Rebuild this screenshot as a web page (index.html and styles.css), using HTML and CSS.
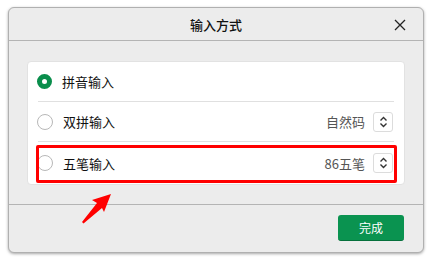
FILE: index.html
```html
<!DOCTYPE html>
<html lang="zh">
<head>
<meta charset="utf-8">
<link rel="stylesheet" href="styles.css">
</head>
<body>
<div class="dialog">
  <div class="header">
    <span class="title">输入方式</span>
    <svg class="close" width="12" height="12" viewBox="0 0 12 12"><path d="M1 1L11 11M11 1L1 11" stroke="#222" stroke-width="1.3" fill="none"/></svg>
  </div>
  <div class="content">
    <div class="card">
      <div class="row">
        <span class="radio on"></span>
        <span class="label">拼音输入</span>
      </div>
      <div class="sep"></div>
      <div class="row">
        <span class="radio"></span>
        <span class="label">双拼输入</span>
        <span class="value">自然码</span>
        <span class="stepper"><svg width="9" height="12" viewBox="0 0 9 12"><path d="M1.5 4.5L4.5 1.5L7.5 4.5M1.5 7.5L4.5 10.5L7.5 7.5" stroke="#333" stroke-width="1.4" fill="none"/></svg></span>
      </div>
      <div class="sep"></div>
      <div class="row last">
        <span class="radio"></span>
        <span class="label">五笔输入</span>
        <span class="value">86五笔</span>
        <span class="stepper"><svg width="9" height="12" viewBox="0 0 9 12"><path d="M1.5 4.5L4.5 1.5L7.5 4.5M1.5 7.5L4.5 10.5L7.5 7.5" stroke="#333" stroke-width="1.4" fill="none"/></svg></span>
        <span class="highlight"></span>
      </div>
    </div>
    <svg class="arrow" width="40" height="36" viewBox="0 0 40 36"><polygon points="1,29 2.5,30.5 21,15 23,19 30,1 11,7 16,10" fill="#ff0000"/></svg>
  </div>
  <div class="footer">
    <button class="done">完成</button>
  </div>
</div>
</body>
</html>
```
FILE: styles.css
```css
html, body {
  margin: 0;
  padding: 0;
  background: #ffffff;
}
body {
  padding: 7px 8px;
  font-family: "Noto Sans CJK SC", "Noto Sans", sans-serif;
}
.dialog {
  width: 414px;
  height: 244px;
  background: #ececec;
  border: 1px solid #b0b0b0;
  border-radius: 6px;
  box-shadow: 0 1px 3px rgba(0,0,0,0.35);
  display: flex;
  flex-direction: column;
  overflow: hidden;
}
.header {
  height: 32px;
  border-bottom: 1px solid #b4b4b4;
  display: flex;
  align-items: center;
  justify-content: center;
  position: relative;
}
.title {
  font-size: 13px;
  font-weight: 500;
  color: #111;
}
.close {
  position: absolute;
  right: 17px;
  top: 11px;
}
.content {
  height: 164px;
  border-bottom: 1px solid #b4b4b4;
  padding: 20px 18px 0 18px;
  box-sizing: border-box;
  position: relative;
}
.card {
  background: #fff;
  border: 1px solid #e2e2e2;
  border-radius: 4px;
  height: 124px;
  box-sizing: border-box;
  display: flex;
  flex-direction: column;
}
.row {
  height: 39px;
  display: flex;
  align-items: center;
  padding: 0 11px 0 9px;
  position: relative;
}
.row.last {
  height: 42px;
}
.sep {
  height: 1px;
  background: #e0e0e0;
  margin: 0 10px;
}
.radio {
  width: 14px;
  height: 14px;
  border: 1px solid #b8b8b8;
  border-radius: 50%;
  box-sizing: content-box;
  background: #fff;
}
.radio.on {
  width: 5px;
  height: 5px;
  border: 5.5px solid #0a8e4c;
}
.label {
  font-size: 13px;
  color: #111;
  margin-left: 10px;
  flex: 1;
}
.value {
  font-size: 13px;
  color: #555;
  margin-right: 8px;
}
.stepper {
  width: 18px;
  height: 18px;
  border: 1px solid #dcdcdc;
  border-radius: 3px;
  display: flex;
  align-items: center;
  justify-content: center;
  background: #fff;
}
.highlight {
  position: absolute;
  left: 8px;
  right: 7px;
  top: 3px;
  bottom: 1px;
  border: 3px solid #ff0000;
  border-radius: 2px;
  pointer-events: none;
}
.arrow {
  position: absolute;
  left: 72px;
  top: 152px;
}
.footer {
  flex: 1;
  display: flex;
  justify-content: flex-end;
  align-items: flex-start;
  padding: 10px 19px 0 0;
}
.done {
  width: 66px;
  height: 26px;
  background: #0a9350;
  border: none;
  border-bottom: 1px solid #06703c;
  border-radius: 3px;
  color: #fff;
  font-family: "Noto Sans CJK SC", sans-serif;
  font-size: 12px;
  padding: 0;
}
```
